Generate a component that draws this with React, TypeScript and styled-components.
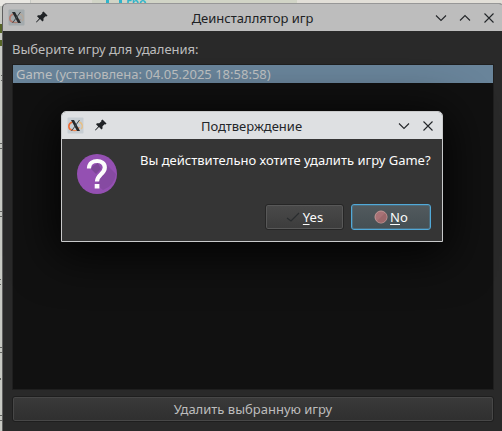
import React from "react";
import styled, { createGlobalStyle, css } from "styled-components";

const Global = createGlobalStyle`
  * { box-sizing: border-box; }
  html, body, #root { margin: 0; height: 100%; }
  body { overflow: hidden; font: 13px/18px "Noto Sans", sans-serif; }
`;

const Desktop = styled.div`
  position: relative;
  width: 502px;
  height: 431px;
  overflow: hidden;
  padding: 3px 0 0 2px;
  background: #c8cac4;
`;

const Backdrop = styled.svg`
  position: absolute;
  inset: 0;
`;

const BackdropText = styled.div`
  position: absolute;
  left: 126px;
  top: -5px;
  font-size: 12px;
  line-height: 16px;
  font-weight: 600;
  color: #2fb4cc;
`;

const MainWindow = styled.main`
  position: relative;
  width: 502px;
  height: 432px;
  display: flex;
  flex-direction: column;
  background: #292929;
  border: 1px solid #8f8f8f;
  border-color: #979797 #606060 #606060 #606060;
  border-radius: 5px 5px 0 0;
  overflow: hidden;
`;

const TitleBar = styled.header<{ $active?: boolean }>`
  flex: none;
  height: 27px;
  display: flex;
  align-items: center;
  padding: 0 6px 0 5px;
  background: ${(p) => (p.$active ? "#dee0e2" : "#bdbdbd")};
  color: ${(p) => (p.$active ? "#232629" : "#202224")};
`;

const Side = styled.div<{ $end?: boolean }>`
  width: 84px;
  display: flex;
  gap: 8px;
  justify-content: ${(p) => (p.$end ? "flex-end" : "flex-start")};
`;

const Title = styled.h1`
  flex: 1;
  margin: 0;
  font-size: inherit;
  font-weight: 400;
  text-align: center;
`;

const Content = styled.section`
  flex: 1;
  display: flex;
  flex-direction: column;
  padding: 9px 9px 0;
`;

const Label = styled.label`
  height: 18px;
  color: #bdbdbd;
  margin-bottom: 6px;
`;

const GameList = styled.ul`
  margin: 0;
  padding: 0;
  list-style: none;
  height: 326px;
  border: 1px solid #1f1f1f;
  background: #111;
`;

const GameItem = styled.li`
  height: 18px;
  padding-left: 3px;
  background: #69849a;
  color: #bfc1c2;
`;

const buttonBase = css`
  display: flex;
  align-items: center;
  justify-content: center;
  padding: 0;
  font: inherit;
  border-radius: 3px;
`;

const RemoveButton = styled.button`
  ${buttonBase}
  flex: none;
  height: 26px;
  margin-top: 6px;
  color: #bdbdbd;
  background: linear-gradient(#3a3a3a, #2f2f2f);
  border: 1px solid #1e1e1e;
  box-shadow: inset 0 0 0 1px #474747;
`;

const Dialog = styled.div`
  position: absolute;
  left: 61px;
  top: 111px;
  width: 382px;
  height: 131px;
  display: flex;
  flex-direction: column;
  background: #353535;
  border: 1px solid #c9cacb;
  border-radius: 5px 5px 0 0;
  overflow: hidden;
  box-shadow: 0 8px 46px 6px rgba(0, 0, 0, 0.85);
`;

const Message = styled.div`
  display: flex;
  height: 66px;
  padding: 12px 11px 0 15px;
  color: #fcfcfc;
`;

const MessageText = styled.p`
  flex: 1;
  margin: 0 0 0 23px;
  white-space: nowrap;
`;

const QuestionIcon = styled.svg`
  margin-top: 3px;
  flex: none;
`;

const Actions = styled.footer`
  display: flex;
  justify-content: flex-end;
  gap: 7px;
  padding-right: 11px;
  margin-top: -1px;
`;

const DialogButton = styled.button<{ $focused?: boolean }>`
  ${buttonBase}
  gap: ${(p) => (p.$focused ? 2 : 3)}px;
  width: ${(p) => (p.$focused ? 80 : 79)}px;
  height: 26px;
  color: #fcfcfc;
  background: ${(p) =>
    p.$focused ? "linear-gradient(#525a5e, #454f53)" : "linear-gradient(#4a4a4a, #3c3c3c)"};
  border: 1px solid ${(p) => (p.$focused ? "#51a9d8" : "#262626")};
  box-shadow: inset 0 0 0 1px ${(p) => (p.$focused ? "#4d6c7c" : "#585858")};
`;

const Mnemonic = styled.span`
  text-decoration: underline;
  text-decoration-thickness: 1px;
  text-underline-offset: 2px;
  text-decoration-skip-ink: none;
`;

const AppIcon = ({ muted }: { muted?: boolean }) => (
  <svg width="17" height="17" viewBox="0 0 17 17">
    <rect x=".5" y=".5" width="16" height="16" rx="1" fill={muted ? "#a4abae" : "#c7ced3"} />
    <path d="M5.500 5C1 6 .5 12 5 13.200" fill="none" stroke={muted ? "#b5786b" : "#ef6a32"} strokeWidth="1.6" />
    <path d="M5 13.200C9 14.500 12 12.500 12 10" fill="none" stroke={muted ? "#ae7f72" : "#ed8a55"} strokeWidth="1.3" />
    <path d="M12 5C16 6 16 10.500 14 12" fill="none" stroke={muted ? "#b4a79a" : "#e8bf83"} strokeWidth="1.3" />
    <path d="M4 3H7L13 14H10Z" fill="#25292c" />
    <path d="M12.500 3L4.500 14" stroke="#43484b" strokeWidth="1" />
  </svg>
);

const PinIcon = () => (
  <svg width="17" height="17" viewBox="0 0 17 17">
    <path d="M10.500 2.500L14.500 6.500L13.500 7.500L12.500 7.200L10.500 9.200L10.500 11.500L9.500 12.500L7 10L3.500 13.500L3 13L6.200 9.400L4 7.200L5 6.200L7.300 6.200L9.400 4.200L9.200 3.500Z" fill="#202326" />
  </svg>
);

const glyphs = {
  down: "M3 5.500L8 10.500L13 5.500",
  up: "M3 10.500L8 5.500L13 10.500",
  close: "M3.500 3.500L12.500 12.500M12.500 3.500L3.500 12.500",
};

const ControlIcon = ({ kind }: { kind: keyof typeof glyphs }) => (
  <svg width="16" height="16" viewBox="0 0 16 16">
    <path d={glyphs[kind]} fill="none" stroke="#232629" strokeWidth="1.100" />
  </svg>
);

export default function App() {
  return (
    <>
      <Global />
      <Desktop>
        <Backdrop width="502" height="431">
          <path d="M0 0H30V6H0Z" fill="#e9e7e2" />
          <path d="M31 0H92V6H31Z" fill="#dddbd4" />
          <path d="M92 0H297V6H92Z" fill="#d1d4c6" />
          <path d="M297 0H502V6H297Z" fill="#e2dfd8" />
          <path d="M106 0H109V4H106ZM119 0H122V4H119Z" fill="#2fb4cc" />
          <path d="M0 24H2V33H0ZM0 40H2V46H0Z" fill="#566526" />
          <path d="M1 75H2V76H1ZM1 80H2V81H1ZM0 143H2V144H0ZM0 148H2V149H0ZM0 211H2V212H0ZM0 216H2V217H0ZM0 279H1V280H0ZM0 284H1V285H0ZM0 347H2V348H0ZM0 352H2V353H0ZM0 378H1V380H0ZM0 415H2V416H0ZM0 420H2V421H0Z" fill="#666864" />
        </Backdrop>
        <BackdropText>гро</BackdropText>
        <MainWindow>
          <TitleBar>
            <Side>
              <AppIcon muted />
              <PinIcon />
            </Side>
            <Title>Деинсталлятор игр</Title>
            <Side $end>
              <ControlIcon kind="down" />
              <ControlIcon kind="up" />
              <ControlIcon kind="close" />
            </Side>
          </TitleBar>
          <Content>
            <Label>Выберите игру для удаления:</Label>
            <GameList>
              <GameItem>Game (установлена: 04.05.2025 18:58:58)</GameItem>
            </GameList>
            <RemoveButton>Удалить выбранную игру</RemoveButton>
          </Content>
        </MainWindow>
        <Dialog role="dialog">
          <TitleBar $active>
            <Side>
              <AppIcon />
              <PinIcon />
            </Side>
            <Title>Подтверждение</Title>
            <Side $end>
              <ControlIcon kind="down" />
              <ControlIcon kind="close" />
            </Side>
          </TitleBar>
          <Message>
            <QuestionIcon width="40" height="40" viewBox="0 0 40 40">
              <circle cx="20" cy="20" r="20" fill="#9450b2" />
              <path d="M28 9L39 20A20 20 0 0 1 26 36L20 31L22 24Z" fill="#864aa2" />
              <path d="M13 14L19 20L24 15L21 9Z" fill="#7d4697" />
              <path d="M12 14.500V13.800C12.500 4.800 27.800 4.800 27.800 13.500C27.800 20 20 20.500 20 27.500" fill="none" stroke="#fcfcfc" strokeWidth="4.200" />
              <rect x="17.700" y="30" width="4.700" height="4.500" fill="#fcfcfc" />
            </QuestionIcon>
            <MessageText>Вы действительно хотите удалить игру Game?</MessageText>
          </Message>
          <Actions>
            <DialogButton>
              <svg width="14" height="16" viewBox="0 0 14 16">
                <path d="M1 9L5 12L13 4" fill="none" stroke="#292c2e" strokeWidth="1.200" />
              </svg>
              <span><Mnemonic>Y</Mnemonic>es</span>
            </DialogButton>
            <DialogButton $focused>
              <svg width="14" height="14" viewBox="0 0 14 14">
                <circle cx="7" cy="7" r="6" fill="#a87276" stroke="#c39896" />
                <path d="M3 11L11 3A5.500 5.500 0 0 1 3 11Z" fill="#9c686b" />
              </svg>
              <span><Mnemonic>N</Mnemonic>o</span>
            </DialogButton>
          </Actions>
        </Dialog>
      </Desktop>
    </>
  );
}
